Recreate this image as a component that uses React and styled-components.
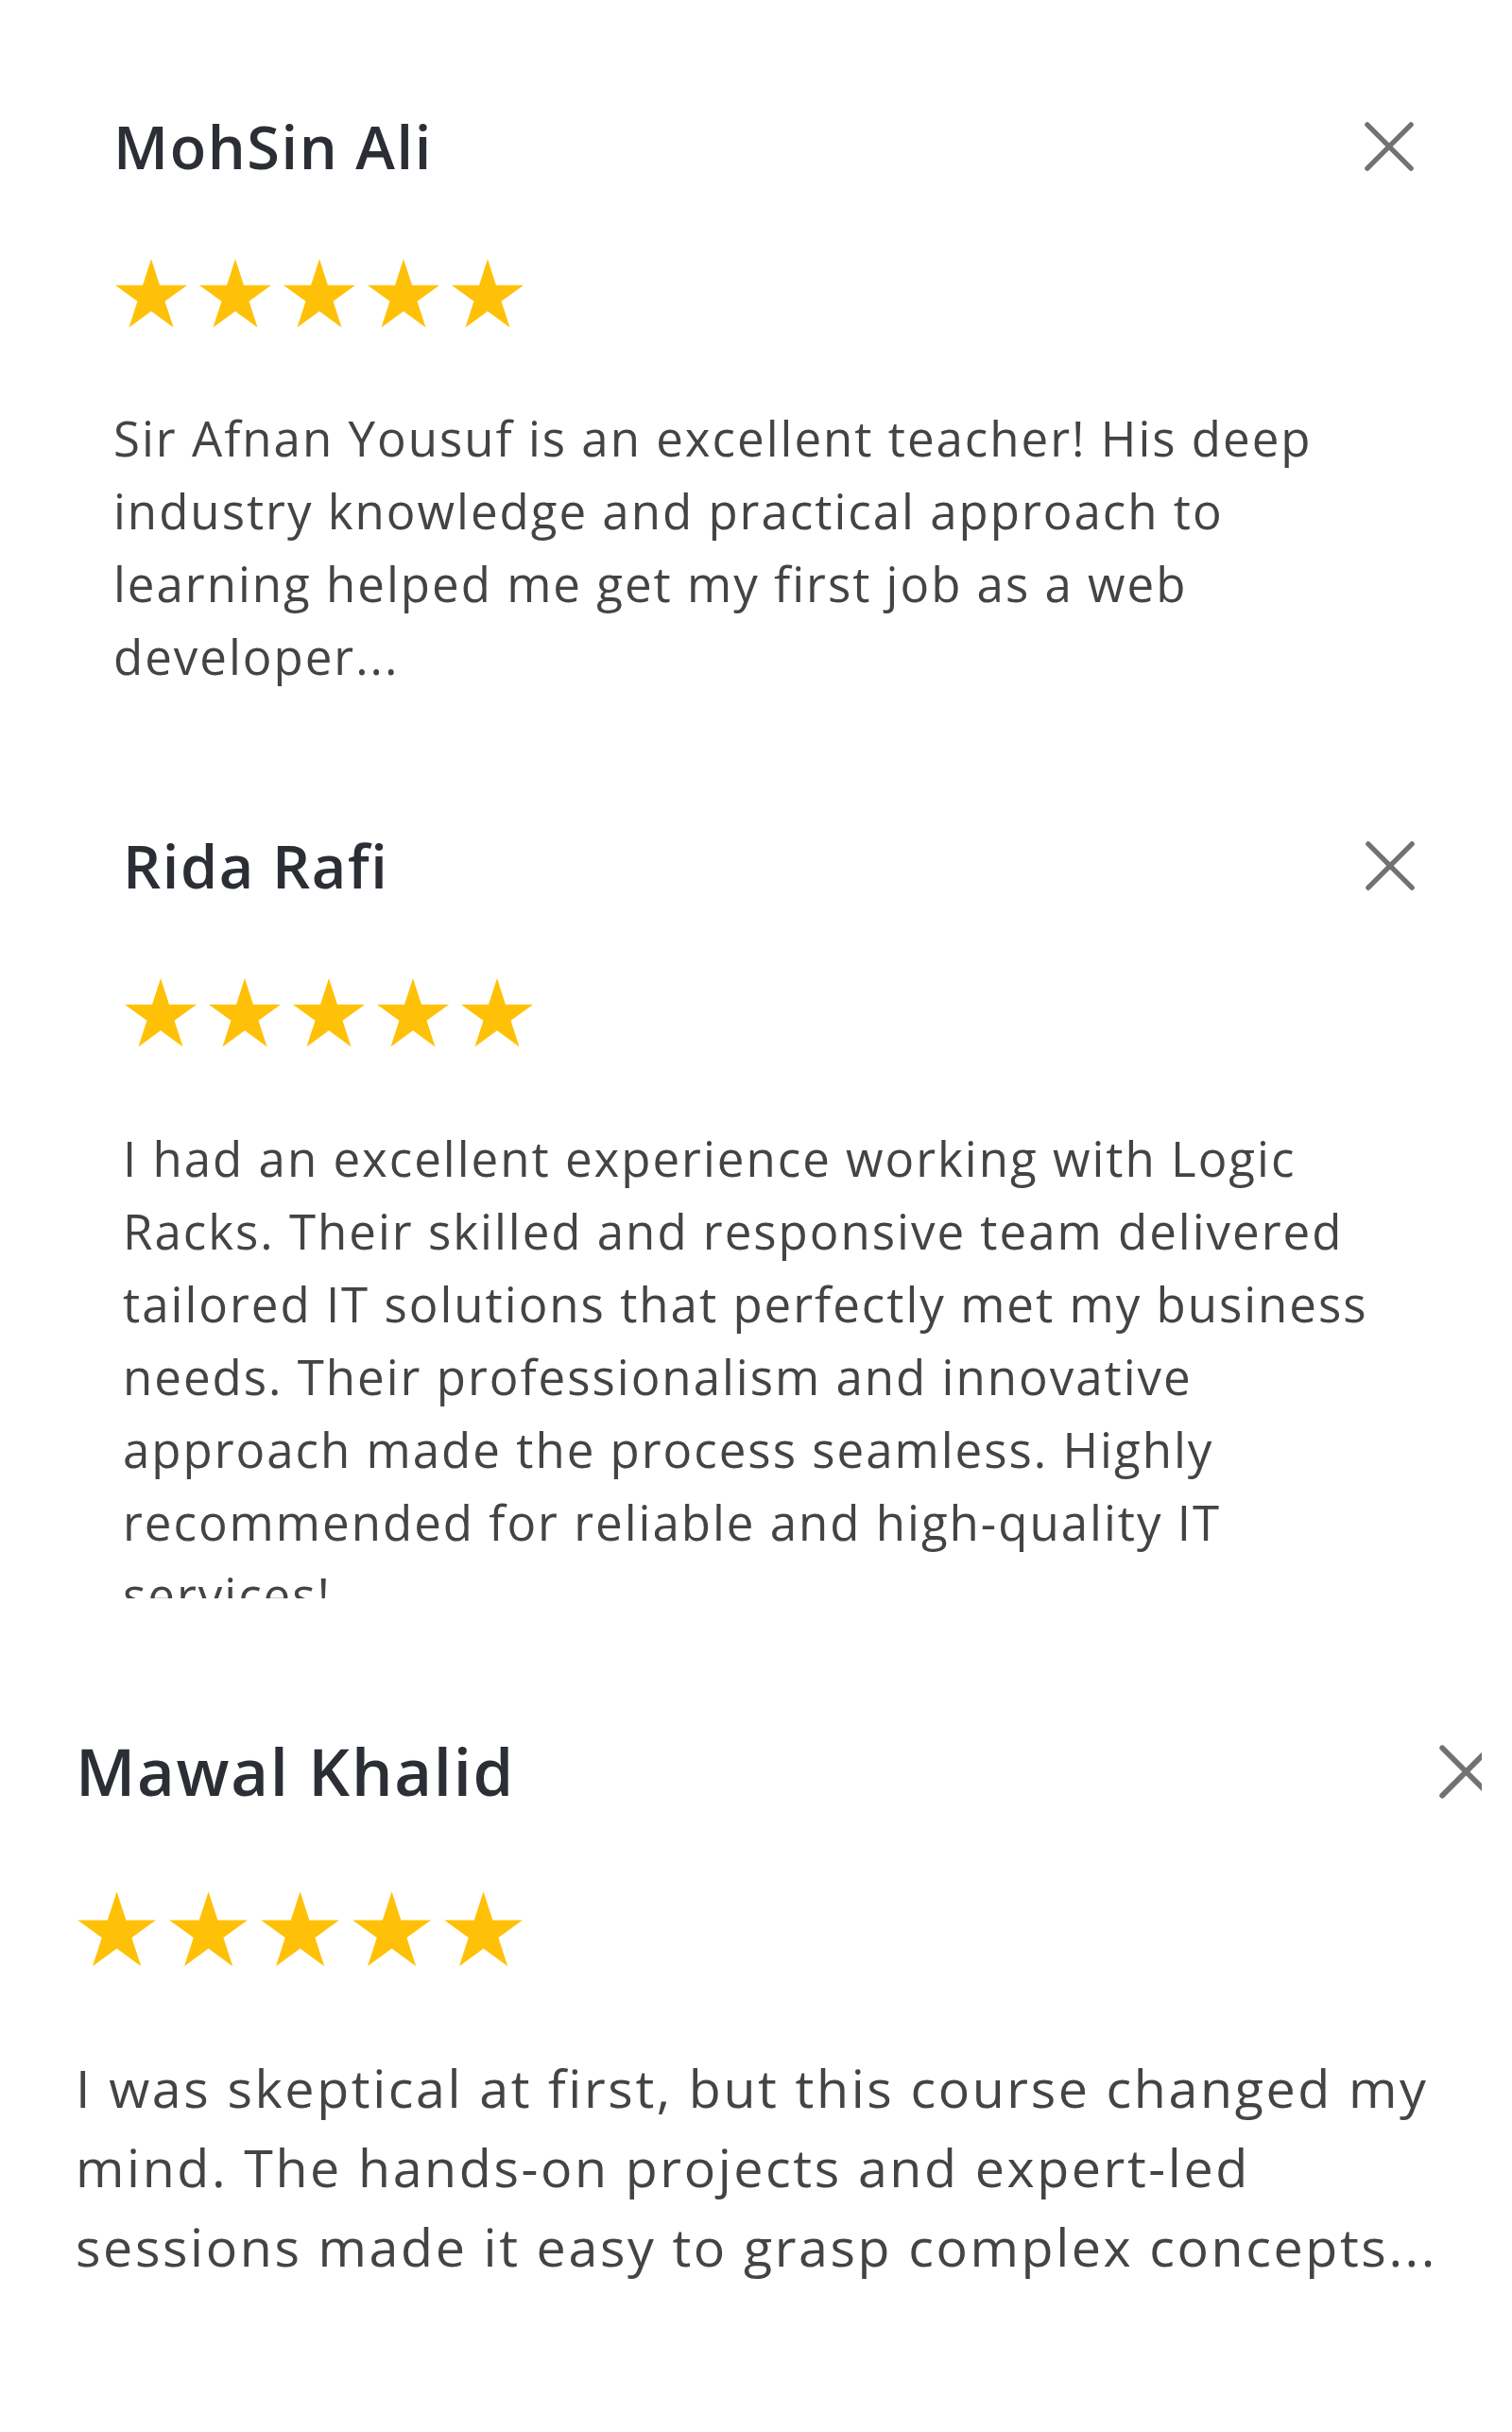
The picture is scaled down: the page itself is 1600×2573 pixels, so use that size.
import React from 'react'
import styled, { createGlobalStyle } from 'styled-components'

const GlobalStyle = createGlobalStyle`
  html, body {
    margin: 0;
    padding: 0;
    background: #ffffff;
  }
  body {
    font-family: "Open Sans", "Liberation Sans", sans-serif;
  }
`

const reviews = [
  {
    id: 1,
    name: 'MohSin Ali',
    text: 'Sir Afnan Yousuf is an excellent teacher! His deep industry knowledge and practical approach to learning helped me get my first job as a web developer...',
    left: 120,
    width: 1377,
    k: 1,
    shift: 0,
  },
  {
    id: 2,
    name: 'Rida Rafi',
    text: 'I had an excellent experience working with Logic Racks. Their skilled and responsive team delivered tailored IT solutions that perfectly met my business needs. Their professionalism and innovative approach made the process seamless. Highly recommended for reliable and high-quality IT services!',
    left: 130,
    width: 1368,
    k: 1,
    shift: 0,
    clip: 504,
  },
  {
    id: 3,
    name: 'Mawal Khalid',
    text: 'I was skeptical at first, but this course changed my mind. The hands-on projects and expert-led sessions made it easy to grasp complex concepts...',
    left: 80,
    width: 1501,
    k: 1.09,
    shift: -3,
  },
]

function Star({ size }) {
  return (
    <StarIcon width={size} height={size * 0.96} viewBox="0 0 100 96">
      <polygon points="50,2.6 61.23,37.15 97.55,37.15 68.17,58.5 79.39,93.05 50,71.7 20.61,93.05 31.83,58.5 2.45,37.15 38.77,37.15" />
    </StarIcon>
  )
}

function ReviewCard({ review }) {
  const { name, text, left, width, k, shift, clip } = review
  return (
    <Card $left={left} $width={width} $shift={shift}>
      <Header>
        <Name $k={k}>{name}</Name>
        <Close $k={k} aria-label="Close">
          <svg viewBox="0 0 56 56" width="100%" height="100%">
            <path d="M4 4 L52 52 M52 4 L4 52" stroke="currentColor" strokeWidth="5.5" strokeLinecap="round" fill="none" />
          </svg>
        </Close>
      </Header>
      <Stars $k={k}>
        {[0, 1, 2, 3, 4].map(i => (
          <Star key={i} size={80 * k} />
        ))}
      </Stars>
      <Review $k={k} $clip={clip}>{text}</Review>
    </Card>
  )
}

export default function App() {
  return (
    <>
      <GlobalStyle />
      <Page>
        {reviews.map(r => (
          <ReviewCard key={r.id} review={r} />
        ))}
      </Page>
    </>
  )
}

const Page = styled.main`
  width: 1568px;
  min-height: 2573px;
  box-sizing: border-box;
  overflow: hidden;
  padding-top: 117px;
  display: flex;
  flex-direction: column;
  gap: 145px;
`

const Card = styled.article`
  margin-left: ${p => p.$left}px;
  margin-top: ${p => p.$shift}px;
  width: ${p => p.$width}px;
  flex-shrink: 0;
`

const Header = styled.div`
  display: flex;
  justify-content: space-between;
  align-items: center;
`

const Name = styled.h3`
  margin: 0;
  font-family: "Open Sans", "Liberation Sans", sans-serif;
  font-weight: 600;
  font-size: ${p => 63 * p.$k}px;
  line-height: 1.2;
  letter-spacing: ${p => 1.6 * p.$k}px;
  color: #2b2f35;
`

const Close = styled.button`
  border: 0;
  background: none;
  padding: 0;
  cursor: pointer;
  width: ${p => 54 * p.$k}px;
  height: ${p => 54 * p.$k}px;
  color: #727272;
  display: flex;
  flex-shrink: 0;
`

const Stars = styled.div`
  display: flex;
  gap: ${p => 9 * p.$k}px;
  margin-top: ${p => 79 + 55 * (p.$k - 1)}px;
`

const StarIcon = styled.svg`
  display: block;
  fill: #ffc107;
`

const Review = styled.p`
  margin: ${p => 77 * p.$k}px 0 0;
  max-width: ${p => (p.$k > 1 ? 1475 : 1340)}px;
  font-family: "Open Sans", "Liberation Sans", sans-serif;
  font-size: ${p => 51 * p.$k}px;
  line-height: ${p => 77 * p.$k}px;
  letter-spacing: ${p => (p.$k > 1 ? 2.6 : 2)}px;
  color: #444444;
  max-height: ${p => (p.$clip ? `${p.$clip}px` : 'none')};
  overflow: hidden;
`
